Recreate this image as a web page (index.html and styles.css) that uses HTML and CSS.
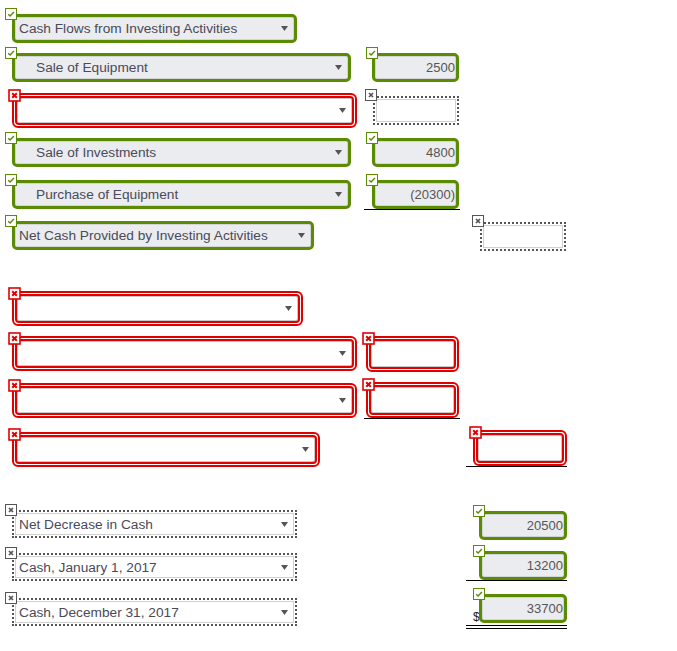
FILE: index.html
```html
<!DOCTYPE html>
<html>
<head>
<meta charset="utf-8">
<link rel="stylesheet" href="styles.css">
</head>
<body>
<div class="sheet">

  <div class="row h39">
    <div class="cell">
      <div class="sel green w285">
        <span class="badge ok"><svg width="12" height="12" viewBox="0 0 12 12"><rect x=".5" y=".5" width="11" height="11" fill="#fff" stroke="#5b8a03"/><path d="M3.2 6.2l1.9 1.9 3.8-4" fill="none" stroke="#5b8a03" stroke-width="1.4"/></svg></span>
        <span class="label">Cash Flows from Investing Activities</span>
        <svg class="caret" width="7" height="5" viewBox="0 0 7 5"><path d="M0 0h7L3.5 5z"/></svg>
      </div>
    </div>
  </div>

  <div class="row h40">
    <div class="cell">
      <div class="sel green w339">
        <span class="badge ok"><svg width="12" height="12" viewBox="0 0 12 12"><rect x=".5" y=".5" width="11" height="11" fill="#fff" stroke="#5b8a03"/><path d="M3.2 6.2l1.9 1.9 3.8-4" fill="none" stroke="#5b8a03" stroke-width="1.4"/></svg></span>
        <span class="label indent">Sale of Equipment</span>
        <svg class="caret" width="7" height="5" viewBox="0 0 7 5"><path d="M0 0h7L3.5 5z"/></svg>
      </div>
    </div>
    <div class="cell col2">
      <div class="amt green a87">
        <span class="badge ok amtbadge"><svg width="12" height="12" viewBox="0 0 12 12"><rect x=".5" y=".5" width="11" height="11" fill="#fff" stroke="#5b8a03"/><path d="M3.2 6.2l1.9 1.9 3.8-4" fill="none" stroke="#5b8a03" stroke-width="1.4"/></svg></span>
        2500
      </div>
    </div>
  </div>

  <div class="row h45">
    <div class="cell">
      <div class="sel red w345">
        <span class="badge bad"><svg width="13" height="13" viewBox="0 0 13 13"><rect x="1" y="1" width="11" height="11" fill="#fff" stroke="#e00000" stroke-width="1.6"/><path d="M4.2 4.2l4.6 4.6M8.8 4.2l-4.6 4.6" stroke="#e00000" stroke-width="2"/></svg></span>
        <div class="inner"><svg class="caret" width="7" height="5" viewBox="0 0 7 5"><path d="M0 0h7L3.5 5z"/></svg></div>
      </div>
    </div>
    <div class="cell col2">
      <div class="amt dotted d2">
        <span class="badge gx"><svg width="12" height="12" viewBox="0 0 12 12"><rect x=".5" y=".5" width="11" height="11" fill="#fff" stroke="#555"/><path d="M4 4l4 4M8 4l-4 4" stroke="#555" stroke-width="1.7"/></svg></span>
      </div>
    </div>
  </div>

  <div class="row h42">
    <div class="cell">
      <div class="sel green w339">
        <span class="badge ok"><svg width="12" height="12" viewBox="0 0 12 12"><rect x=".5" y=".5" width="11" height="11" fill="#fff" stroke="#5b8a03"/><path d="M3.2 6.2l1.9 1.9 3.8-4" fill="none" stroke="#5b8a03" stroke-width="1.4"/></svg></span>
        <span class="label indent">Sale of Investments</span>
        <svg class="caret" width="7" height="5" viewBox="0 0 7 5"><path d="M0 0h7L3.5 5z"/></svg>
      </div>
    </div>
    <div class="cell col2">
      <div class="amt green a87">
        <span class="badge ok amtbadge"><svg width="12" height="12" viewBox="0 0 12 12"><rect x=".5" y=".5" width="11" height="11" fill="#fff" stroke="#5b8a03"/><path d="M3.2 6.2l1.9 1.9 3.8-4" fill="none" stroke="#5b8a03" stroke-width="1.4"/></svg></span>
        4800
      </div>
    </div>
  </div>

  <div class="row h41">
    <div class="cell">
      <div class="sel green w339">
        <span class="badge ok"><svg width="12" height="12" viewBox="0 0 12 12"><rect x=".5" y=".5" width="11" height="11" fill="#fff" stroke="#5b8a03"/><path d="M3.2 6.2l1.9 1.9 3.8-4" fill="none" stroke="#5b8a03" stroke-width="1.4"/></svg></span>
        <span class="label indent">Purchase of Equipment</span>
        <svg class="caret" width="7" height="5" viewBox="0 0 7 5"><path d="M0 0h7L3.5 5z"/></svg>
      </div>
    </div>
    <div class="cell col2 under2">
      <div class="amt green a87">
        <span class="badge ok amtbadge"><svg width="12" height="12" viewBox="0 0 12 12"><rect x=".5" y=".5" width="11" height="11" fill="#fff" stroke="#5b8a03"/><path d="M3.2 6.2l1.9 1.9 3.8-4" fill="none" stroke="#5b8a03" stroke-width="1.4"/></svg></span>
        (20300)
      </div>
    </div>
  </div>

  <div class="row h70">
    <div class="cell">
      <div class="sel green w302">
        <span class="badge ok"><svg width="12" height="12" viewBox="0 0 12 12"><rect x=".5" y=".5" width="11" height="11" fill="#fff" stroke="#5b8a03"/><path d="M3.2 6.2l1.9 1.9 3.8-4" fill="none" stroke="#5b8a03" stroke-width="1.4"/></svg></span>
        <span class="label">Net Cash Provided by Investing Activities</span>
        <svg class="caret" width="7" height="5" viewBox="0 0 7 5"><path d="M0 0h7L3.5 5z"/></svg>
      </div>
    </div>
    <div class="cell col2"></div>
    <div class="cell col3">
      <div class="amt dotted d3">
        <span class="badge gx"><svg width="12" height="12" viewBox="0 0 12 12"><rect x=".5" y=".5" width="11" height="11" fill="#fff" stroke="#555"/><path d="M4 4l4 4M8 4l-4 4" stroke="#555" stroke-width="1.7"/></svg></span>
      </div>
    </div>
  </div>

  <div class="row h45">
    <div class="cell">
      <div class="sel red w291">
        <span class="badge bad"><svg width="13" height="13" viewBox="0 0 13 13"><rect x="1" y="1" width="11" height="11" fill="#fff" stroke="#e00000" stroke-width="1.6"/><path d="M4.2 4.2l4.6 4.6M8.8 4.2l-4.6 4.6" stroke="#e00000" stroke-width="2"/></svg></span>
        <div class="inner"><svg class="caret" width="7" height="5" viewBox="0 0 7 5"><path d="M0 0h7L3.5 5z"/></svg></div>
      </div>
    </div>
  </div>

  <div class="row h46">
    <div class="cell">
      <div class="sel red w345">
        <span class="badge bad"><svg width="13" height="13" viewBox="0 0 13 13"><rect x="1" y="1" width="11" height="11" fill="#fff" stroke="#e00000" stroke-width="1.6"/><path d="M4.2 4.2l4.6 4.6M8.8 4.2l-4.6 4.6" stroke="#e00000" stroke-width="2"/></svg></span>
        <div class="inner"><svg class="caret" width="7" height="5" viewBox="0 0 7 5"><path d="M0 0h7L3.5 5z"/></svg></div>
      </div>
    </div>
    <div class="cell col2">
      <div class="amt red r2">
        <span class="badge bad"><svg width="13" height="13" viewBox="0 0 13 13"><rect x="1" y="1" width="11" height="11" fill="#fff" stroke="#e00000" stroke-width="1.6"/><path d="M4.2 4.2l4.6 4.6M8.8 4.2l-4.6 4.6" stroke="#e00000" stroke-width="2"/></svg></span>
        <div class="inner"></div>
      </div>
    </div>
  </div>

  <div class="row h48">
    <div class="cell">
      <div class="sel red w345 mt1">
        <span class="badge bad"><svg width="13" height="13" viewBox="0 0 13 13"><rect x="1" y="1" width="11" height="11" fill="#fff" stroke="#e00000" stroke-width="1.6"/><path d="M4.2 4.2l4.6 4.6M8.8 4.2l-4.6 4.6" stroke="#e00000" stroke-width="2"/></svg></span>
        <div class="inner"><svg class="caret" width="7" height="5" viewBox="0 0 7 5"><path d="M0 0h7L3.5 5z"/></svg></div>
      </div>
    </div>
    <div class="cell col2 under2">
      <div class="amt red r2">
        <span class="badge bad"><svg width="13" height="13" viewBox="0 0 13 13"><rect x="1" y="1" width="11" height="11" fill="#fff" stroke="#e00000" stroke-width="1.6"/><path d="M4.2 4.2l4.6 4.6M8.8 4.2l-4.6 4.6" stroke="#e00000" stroke-width="2"/></svg></span>
        <div class="inner"></div>
      </div>
    </div>
  </div>

  <div class="row h79">
    <div class="cell">
      <div class="sel red w308 mt2">
        <span class="badge bad"><svg width="13" height="13" viewBox="0 0 13 13"><rect x="1" y="1" width="11" height="11" fill="#fff" stroke="#e00000" stroke-width="1.6"/><path d="M4.2 4.2l4.6 4.6M8.8 4.2l-4.6 4.6" stroke="#e00000" stroke-width="2"/></svg></span>
        <div class="inner"><svg class="caret" width="7" height="5" viewBox="0 0 7 5"><path d="M0 0h7L3.5 5z"/></svg></div>
      </div>
    </div>
    <div class="cell col2"></div>
    <div class="cell col3 under3">
      <div class="amt red r3">
        <span class="badge bad"><svg width="13" height="13" viewBox="0 0 13 13"><rect x="1" y="1" width="11" height="11" fill="#fff" stroke="#e00000" stroke-width="1.6"/><path d="M4.2 4.2l4.6 4.6M8.8 4.2l-4.6 4.6" stroke="#e00000" stroke-width="2"/></svg></span>
        <div class="inner"></div>
      </div>
    </div>
  </div>

  <div class="row h42">
    <div class="cell">
      <div class="sel dotted w285 mt1">
        <span class="badge gx gxsel"><svg width="12" height="12" viewBox="0 0 12 12"><rect x=".5" y=".5" width="11" height="11" fill="#fff" stroke="#555"/><path d="M4 4l4 4M8 4l-4 4" stroke="#555" stroke-width="1.7"/></svg></span>
        <span class="label">Net Decrease in Cash</span>
        <svg class="caret" width="7" height="5" viewBox="0 0 7 5"><path d="M0 0h7L3.5 5z"/></svg>
      </div>
    </div>
    <div class="cell col2"></div>
    <div class="cell col3">
      <div class="amt green a88 mt2">
        <span class="badge ok amtbadge"><svg width="12" height="12" viewBox="0 0 12 12"><rect x=".5" y=".5" width="11" height="11" fill="#fff" stroke="#5b8a03"/><path d="M3.2 6.2l1.9 1.9 3.8-4" fill="none" stroke="#5b8a03" stroke-width="1.4"/></svg></span>
        20500
      </div>
    </div>
  </div>

  <div class="row h42">
    <div class="cell">
      <div class="sel dotted w285 mt2">
        <span class="badge gx gxsel"><svg width="12" height="12" viewBox="0 0 12 12"><rect x=".5" y=".5" width="11" height="11" fill="#fff" stroke="#555"/><path d="M4 4l4 4M8 4l-4 4" stroke="#555" stroke-width="1.7"/></svg></span>
        <span class="label">Cash, January 1, 2017</span>
        <svg class="caret" width="7" height="5" viewBox="0 0 7 5"><path d="M0 0h7L3.5 5z"/></svg>
      </div>
    </div>
    <div class="cell col2"></div>
    <div class="cell col3 under3">
      <div class="amt green a88">
        <span class="badge ok amtbadge"><svg width="12" height="12" viewBox="0 0 12 12"><rect x=".5" y=".5" width="11" height="11" fill="#fff" stroke="#5b8a03"/><path d="M3.2 6.2l1.9 1.9 3.8-4" fill="none" stroke="#5b8a03" stroke-width="1.4"/></svg></span>
        13200
      </div>
    </div>
  </div>

  <div class="row h40">
    <div class="cell">
      <div class="sel dotted w285 mt5">
        <span class="badge gx gxsel"><svg width="12" height="12" viewBox="0 0 12 12"><rect x=".5" y=".5" width="11" height="11" fill="#fff" stroke="#555"/><path d="M4 4l4 4M8 4l-4 4" stroke="#555" stroke-width="1.7"/></svg></span>
        <span class="label">Cash, December 31, 2017</span>
        <svg class="caret" width="7" height="5" viewBox="0 0 7 5"><path d="M0 0h7L3.5 5z"/></svg>
      </div>
    </div>
    <div class="cell col2"></div>
    <div class="cell col3 total">
      <span class="dollar">$</span>
      <div class="amt green a88 mt1">
        <span class="badge ok amtbadge"><svg width="12" height="12" viewBox="0 0 12 12"><rect x=".5" y=".5" width="11" height="11" fill="#fff" stroke="#5b8a03"/><path d="M3.2 6.2l1.9 1.9 3.8-4" fill="none" stroke="#5b8a03" stroke-width="1.4"/></svg></span>
        33700
      </div>
    </div>
  </div>

</div>
</body>
</html>
```

FILE: styles.css
```css
* { box-sizing: border-box; }

html, body {
  margin: 0;
  padding: 0;
  background: #fff;
}

body {
  font-family: "Liberation Sans", Arial, sans-serif;
  font-size: 13.7px;
  color: #4a4a58;
}

.sheet {
  padding: 14px 0 0 12px;
}

.row {
  display: grid;
  grid-template-columns: 352px 102px 101px;
  align-items: start;
}

.h39 { height: 39px; }
.h40 { height: 40px; }
.h41 { height: 41px; }
.h42 { height: 42px; }
.h45 { height: 45px; }
.h46 { height: 46px; }
.h48 { height: 48px; }
.h70 { height: 70px; }
.h79 { height: 79px; }

.cell { position: relative; }

.mt1 { margin-top: 1px; }
.mt2 { margin-top: 2px; }
.mt5 { margin-top: 5px; }

/* ---------- select boxes ---------- */
.sel {
  position: relative;
  display: flex;
  align-items: center;
  justify-content: space-between;
}

.sel.green {
  height: 29px;
  border: 3px solid #5b8a03;
  border-radius: 5px;
  background: #ebecef;
  box-shadow: inset 0 0 0 1px #d3d4d7;
  padding: 0 6px 0 4px;
}

.sel.dotted {
  height: 28px;
  border: 2px dotted #555;
  background: #fff;
  box-shadow: inset 0 0 0 1px #fff, inset 0 0 0 2px #d0d0d0;
  padding: 0 7px 0 5px;
}

.sel.red,
.amt.red {
  height: 35px;
  border: 2px solid #e00000;
  border-radius: 6px;
  padding: 1px;
  background: #fff;
}

.sel.red { align-items: stretch; }

.red .inner {
  flex: 1;
  height: 100%;
  border: 2px solid #e00000;
  border-radius: 4px;
  box-shadow: inset 0 0 0 1px #c9c9c9;
  display: flex;
  align-items: center;
  justify-content: flex-end;
  padding-right: 6px;
}

.w285 { width: 285px; }
.w291 { width: 291px; }
.w302 { width: 302px; }
.w308 { width: 308px; }
.w339 { width: 339px; }
.w345 { width: 345px; }

.label {
  white-space: nowrap;
  line-height: 1;
  padding-top: 1px;
}

.label.indent { padding-left: 17px; }

.caret {
  flex: none;
  fill: #555;
}

/* ---------- amount boxes ---------- */
.amt {
  position: relative;
}

.amt.green {
  height: 29px;
  border: 3px solid #5b8a03;
  border-radius: 5px;
  background: #ebecef;
  box-shadow: inset 0 0 0 1px #d3d4d7;
  display: flex;
  align-items: center;
  justify-content: flex-end;
  padding-right: 1px;
  font-size: 13px;
  color: #555;
}

.a87 { width: 87px; margin-left: 8px; }
.a88 { width: 88px; margin-left: 13px; }

.amt.dotted {
  height: 29px;
  border: 2px dotted #555;
  background: #fff;
  box-shadow: inset 0 0 0 1px #fff, inset 0 0 0 2px #d0d0d0;
}

.d2 { width: 86px; margin-left: 9px; margin-top: 3px; }
.d3 { width: 86px; margin-left: 14px; margin-top: 1px; }

.amt.red { height: 36px; }
.r2 { width: 93px; margin-left: 2px; }
.r3 { width: 94px; margin-left: 7px; }

/* ---------- underlines ---------- */
.under2 {
  width: 96px;
  border-bottom: 1px solid #000;
}

.under3 {
  width: 101px;
  border-bottom: 1px solid #000;
}

.total {
  width: 101px;
  padding-bottom: 2px;
  border-bottom: 4px double #000;
}

.dollar {
  position: absolute;
  left: 7px;
  top: 18px;
  font-size: 12px;
  color: #222;
  line-height: 1;
}

/* ---------- badges ---------- */
.badge {
  position: absolute;
  display: block;
  line-height: 0;
  z-index: 2;
}

.badge svg { display: block; }

.badge.ok { left: -10px; top: -9px; }
.badge.ok.amtbadge { left: -9px; top: -9px; }
.badge.bad { left: -6px; top: -6px; }
.badge.gx { left: -10px; top: -9px; }
.badge.gx.gxsel { left: -9px; top: -8px; }
```
